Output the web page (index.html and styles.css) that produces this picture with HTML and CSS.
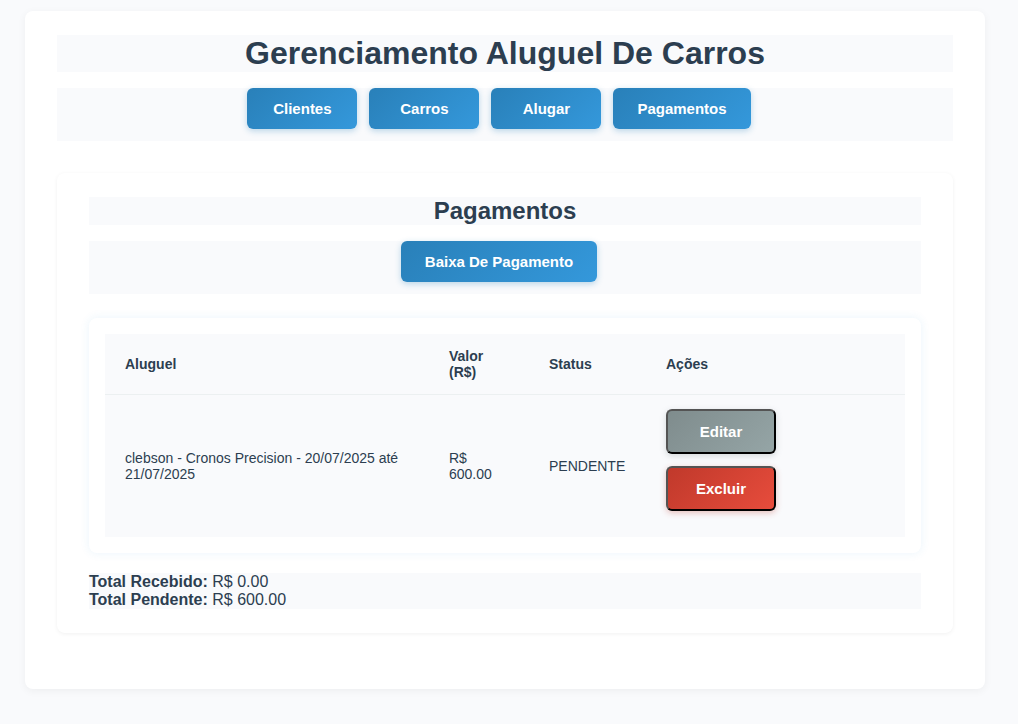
FILE: index.html
```html
<!DOCTYPE html>
<html lang="pt-BR">
<head>
<meta charset="utf-8">
<title>Gerenciamento Aluguel De Carros</title>
<meta name="viewport" content="width=device-width, initial-scale=1">
<link rel="stylesheet" href="styles.css">
</head>
<body class="page">
<main class="container">
  <h1 class="title">Gerenciamento Aluguel De Carros</h1>
  <nav class="actions">
    <a class="btn" href="#clientes">Clientes</a>
    <a class="btn" href="#carros">Carros</a>
    <a class="btn" href="#alugar">Alugar</a>
    <a class="btn" href="#pagamentos">Pagamentos</a>
  </nav>
  <section class="panel" id="pagamentos">
    <h2 class="subtitle">Pagamentos</h2>
    <div class="actions">
      <a class="btn" href="#baixa">Baixa De Pagamento</a>
    </div>
    <div class="table-card">
      <table class="table">
        <colgroup>
          <col>
          <col class="col-value">
          <col class="col-status">
          <col class="col-actions">
        </colgroup>
        <thead>
          <tr><th scope="col">Aluguel</th><th scope="col">Valor (R$)</th><th scope="col">Status</th><th scope="col">Ações</th></tr>
        </thead>
        <tbody>
          <tr>
            <td>clebson - Cronos Precision - 20/07/2025 até 21/07/2025</td>
            <td>R$ 600.00</td>
            <td>PENDENTE</td>
            <td>
              <div class="row-actions">
                <button type="button" class="btn btn-edit">Editar</button>
                <button type="button" class="btn btn-delete">Excluir</button>
              </div>
            </td>
          </tr>
        </tbody>
      </table>
    </div>
    <div class="totals">
      <div><strong>Total Recebido:</strong> R$ 0.00</div>
      <div><strong>Total Pendente:</strong> R$ 600.00</div>
    </div>
  </section>
</main>
</body>
</html>
```

FILE: styles.css
```css
* {
  box-sizing: border-box;
}

.page {
  margin: 0;
  padding: 11px 8px 32px 0;
  background: #f9fafc;
  color: #2c3e50;
  font-family: "Liberation Sans", Arial, sans-serif;
  font-size: 16px;
  line-height: 18px;
}

.container {
  max-width: 960px;
  margin: 0 auto;
  padding: 24px 32px 56px;
  background: #fff;
  border-radius: 8px;
  box-shadow: 0 2px 8px rgba(0, 0, 0, 0.05);
}

.title,
.subtitle {
  margin: 0 0 16px;
  background: #f9fafc;
  text-align: center;
}

.title {
  font-size: 32px;
  line-height: 37px;
}

.subtitle {
  font-size: 24px;
  line-height: 28px;
}

.actions {
  display: flex;
  flex-wrap: wrap;
  justify-content: center;
  background: #f9fafc;
}

.btn {
  min-width: 110px;
  margin: 0 12px 12px 0;
  padding: 12px 24px;
  border-radius: 6px;
  background: linear-gradient(135deg, #2980b9, #3498db);
  box-shadow: 0 2px 6px rgba(41, 128, 185, 0.3);
  color: #fff;
  font: bold 15px/17px "Liberation Sans", Arial, sans-serif;
  text-align: center;
  text-decoration: none;
  cursor: pointer;
}

.btn-edit,
.btn-delete {
  border: 2px outset #000;
}

.btn-edit {
  background: linear-gradient(135deg, #7f8c8d, #95a5a6);
  box-shadow: 0 2px 6px rgba(127, 140, 141, 0.3);
}

.btn-delete {
  background: linear-gradient(135deg, #c0392b, #e74c3c);
  box-shadow: 0 2px 6px rgba(192, 57, 43, 0.3);
}

.panel {
  margin-top: 32px;
  padding: 24px 32px;
  background: #fff;
  border-radius: 8px;
  box-shadow: 0 1px 4px rgba(0, 0, 0, 0.06);
}

.table-card {
  margin-top: 24px;
  padding: 16px;
  background: #fff;
  border-radius: 8px;
  box-shadow: 0 0 10px rgba(52, 152, 219, 0.1);
}

.table {
  width: 100%;
  border-collapse: collapse;
  table-layout: fixed;
  background: #f9fafc;
  font-size: 14px;
  line-height: 16px;
}

.table th,
.table td {
  padding: 14px 20px;
  text-align: left;
  vertical-align: middle;
}

.table th {
  border-bottom: 1px solid #ecf0f1;
}

.col-value {
  width: 100px;
}

.col-status {
  width: 117px;
}

.col-actions {
  width: 259px;
}

.row-actions {
  display: flex;
  flex-direction: column;
  align-items: flex-start;
}

.totals {
  margin-top: 20px;
  background: #f9fafc;
}
```
